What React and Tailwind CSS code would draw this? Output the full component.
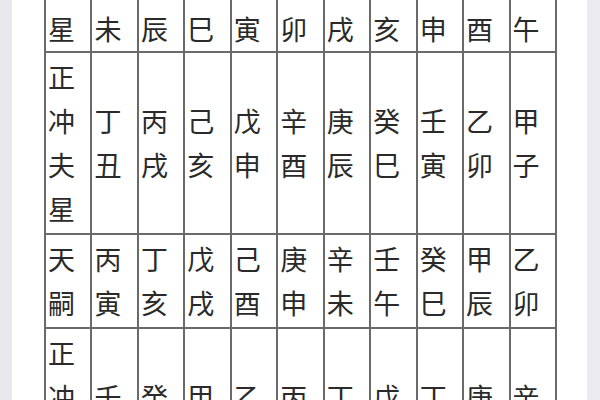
import React from 'react';

// 表格数据：每个单元格是自上而下的字
const ROWS = [
	{
		head: ['夫', '星'],
		cells: [['子', '未'], ['丑', '辰'], ['寅', '巳'], ['卯', '寅'], ['辰', '卯'], ['巳', '戌'], ['午', '亥'], ['未', '申'], ['申', '酉'], ['酉', '午']],
		header: true,
	},
	{
		head: ['正', '冲', '夫', '星'],
		cells: [['丁', '丑'], ['丙', '戌'], ['己', '亥'], ['戊', '申'], ['辛', '酉'], ['庚', '辰'], ['癸', '巳'], ['壬', '寅'], ['乙', '卯'], ['甲', '子']],
	},
	{
		head: ['天', '嗣'],
		cells: [['丙', '寅'], ['丁', '亥'], ['戊', '戌'], ['己', '酉'], ['庚', '申'], ['辛', '未'], ['壬', '午'], ['癸', '巳'], ['甲', '辰'], ['乙', '卯']],
	},
	{
		head: ['正', '冲', '嗣', '星'],
		cells: [['壬', '申'], ['癸', '亥'], ['甲', '戌'], ['乙', '酉'], ['丙', '申'], ['丁', '未'], ['戊', '午'], ['丁', '巳'], ['庚', '辰'], ['辛', '卯']],
	},
];

const Cell = ({ chars, header }) => (
	<td
		className={`border-2 border-[#6a6a6a] align-middle text-left px-[2px] ${
			header ? 'pt-[2px] pb-0' : 'py-[2px]'
		}`}
	>
		{chars.map((c, i) => (
			<span key={i} className="block">
				{c}
			</span>
		))}
	</td>
);

const App = () => {
	return (
		<div className="flex w-[600px] h-[400px] overflow-hidden bg-white">
			<div className="w-[12px] h-full bg-[#e9e9ed] shrink-0" />
			<div className="flex-1 h-full overflow-hidden pl-[32px]">
				<table
					className="table-fixed border-collapse w-[513px] mt-[-41px] text-[27px] leading-[44px] text-[#2a2a2a]"
					style={{ fontFamily: '"Noto Sans CJK SC", "Noto Sans", sans-serif' }}
				>
					<tbody>
						{ROWS.map((row, r) => (
							<tr key={r}>
								<Cell chars={row.head} header={row.header} />
								{row.cells.map((chars, i) => (
									<Cell key={i} chars={chars} header={row.header} />
								))}
							</tr>
						))}
					</tbody>
				</table>
			</div>
			<div className="w-[13px] h-full bg-[#ebebef] shrink-0" />
		</div>
	);
};

export default App;
